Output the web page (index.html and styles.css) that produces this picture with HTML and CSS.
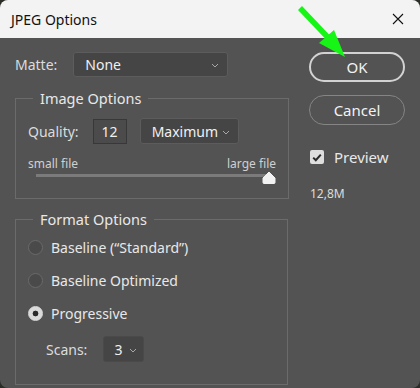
FILE: index.html
```html
<!DOCTYPE html>
<html lang="en">
  <head>
    <meta charset="UTF-8" />
    <title>JPEG Options</title>
    <link rel="stylesheet" href="styles.css">
  </head>
  <body>
    <div class="window">
      <div class="titlebar">
        <span class="title">JPEG Options</span>
        <svg class="close" width="12" height="12" viewBox="0 0 12 12">
          <path d="M1 1L11 11M11 1L1 11" stroke="#111" stroke-width="1.1" fill="none" />
        </svg>
      </div>

      <div class="content">
        <!-- left column -->
        <div class="left">
          <div class="row matte-row">
            <span class="label">Matte:</span>
            <div class="select matte-select">
              <span>None</span>
              <svg class="chev" width="8" height="5" viewBox="0 0 8 5"><path d="M1 1L4 4L7 1" stroke="#a8a8a8" fill="none" /></svg>
            </div>
          </div>

          <fieldset class="group image-group">
            <legend>Image Options</legend>
            <div class="row quality-row">
              <span class="label">Quality:</span>
              <div class="num-input">12</div>
              <div class="select quality-select">
                <span>Maximum</span>
                <svg class="chev" width="8" height="5" viewBox="0 0 8 5"><path d="M1 1L4 4L7 1" stroke="#a8a8a8" fill="none" /></svg>
              </div>
            </div>
            <div class="slider-labels">
              <span>small file</span>
              <span>large file</span>
            </div>
            <div class="slider">
              <div class="track"></div>
              <svg class="thumb" width="14" height="13" viewBox="0 0 14 13">
                <path d="M7 1L13 7V11.5Q13 12.5 12 12.5H2Q1 12.5 1 11.5V7Z" fill="#f2f2f2" stroke="#f2f2f2" stroke-linejoin="round" />
              </svg>
            </div>
          </fieldset>

          <fieldset class="group format-group">
            <legend>Format Options</legend>
            <div class="radio-row">
              <span class="radio"></span>
              <span>Baseline (“Standard”)</span>
            </div>
            <div class="radio-row">
              <span class="radio"></span>
              <span>Baseline Optimized</span>
            </div>
            <div class="radio-row">
              <span class="radio checked"></span>
              <span>Progressive</span>
            </div>
            <div class="row scans-row">
              <span class="label">Scans:</span>
              <div class="select scans-select">
                <span>3</span>
                <svg class="chev" width="8" height="5" viewBox="0 0 8 5"><path d="M1 1L4 4L7 1" stroke="#a8a8a8" fill="none" /></svg>
              </div>
            </div>
          </fieldset>
        </div>

        <!-- right column -->
        <div class="right">
          <button class="btn btn-ok">OK</button>
          <button class="btn btn-cancel">Cancel</button>
          <div class="preview">
            <span class="checkbox">
              <svg width="10" height="9" viewBox="0 0 10 9"><path d="M1.2 4.6L3.8 7.2L8.8 1.6" stroke="#2b2b2b" stroke-width="2" fill="none" /></svg>
            </span>
            <span>Preview</span>
          </div>
          <div class="size">12,8M</div>
        </div>
      </div>

      <!-- annotation arrow -->
      <svg class="arrow" width="70" height="70" viewBox="0 0 70 70">
        <path d="M8 8L45 47" stroke="#16f516" stroke-width="5.5" fill="none" />
        <path d="M27 43L42 30L53 57Z" fill="#16f516" />
      </svg>
    </div>
  </body>
</html>
```

FILE: styles.css
```css
body {
  margin: 0;
  background-color: #2a2c26;
  font-family: "Noto Sans", "Open Sans", sans-serif;
  font-size: 14px;
  color: #e8e8e8;
}

.window {
  position: relative;
  width: 420px;
  height: 388px;
  background-color: #535353;
  border-radius: 8px;
  overflow: hidden;
}

.titlebar {
  height: 38px;
  background-color: #f3f3f3;
  display: flex;
  align-items: center;
  justify-content: space-between;
  padding: 0 16px 0 11px;
}

.title {
  color: #111;
  font-size: 14px;
}

.content {
  display: flex;
  padding: 14px 0 0 15px;
}

.left {
  width: 273px;
}

.right {
  margin-left: 21px;
  width: 96px;
  display: flex;
  flex-direction: column;
}

.row {
  display: flex;
  align-items: center;
}

.label {
  color: #dcdcdc;
}

.select {
  box-sizing: border-box;
  display: flex;
  align-items: center;
  justify-content: space-between;
  background-color: #454545;
  border: 1px solid #5c5c5c;
  border-radius: 3px;
  padding: 0 8px 0 11px;
  color: #f0f0f0;
}

.chev {
  margin-top: 2px;
}

.matte-row {
  height: 25px;
}

.matte-select {
  margin-left: 16px;
  width: 155px;
  height: 25px;
}

.group {
  margin: 0;
  border: 1px solid #6b6b6b;
  padding: 0 12px;
}

.group legend {
  margin-left: 5px;
  padding: 0 7px;
  font-size: 14.5px;
  line-height: 20px;
  color: #e8e8e8;
}

.image-group {
  margin-top: 11px;
  height: 111px;
  box-sizing: border-box;
}

.quality-row {
  margin-top: 10px;
  height: 26px;
}

.num-input {
  box-sizing: border-box;
  margin-left: 14px;
  width: 34px;
  height: 25px;
  background-color: #4b4b4b;
  border: 1px solid #383838;
  text-align: center;
  line-height: 23px;
  color: #f0f0f0;
}

.quality-select {
  margin-left: 13px;
  width: 99px;
  height: 26px;
}

.slider-labels {
  display: flex;
  justify-content: space-between;
  font-size: 12px;
  line-height: 16px;
  color: #d0d0d0;
  margin-top: 12px;
  width: 248px;
}

.slider {
  position: relative;
  height: 16px;
  margin-left: 8px;
  width: 240px;
}

.track {
  margin-top: 2px;
  height: 3px;
  width: 234px;
  background-color: #7b7b7b;
}

.thumb {
  position: absolute;
  left: 226px;
  top: -3px;
}

.format-group {
  margin-top: 10px;
  height: 176px;
  box-sizing: border-box;
  padding-top: 2px;
}

.radio-row {
  display: flex;
  align-items: center;
  height: 33px;
}

.radio {
  box-sizing: border-box;
  width: 15px;
  height: 15px;
  border-radius: 50%;
  border: 1px solid #6a6a6a;
  background-color: #4a4a4a;
  margin-right: 8px;
}

.radio.checked {
  border-color: #dadada;
  background: radial-gradient(circle, #2a2a2a 0 2.6px, #dadada 3.2px);
}

.scans-row {
  margin-top: 6px;
  height: 26px;
  padding-left: 18px;
}

.scans-select {
  margin-left: 16px;
  width: 41px;
  height: 26px;
  padding: 0 6px 0 10px;
  border-color: #4a4a4a;
}

.btn {
  box-sizing: border-box;
  width: 96px;
  height: 30px;
  border-radius: 15px;
  background: transparent;
  font-family: inherit;
  font-size: 15px;
  color: #f2f2f2;
  padding: 0;
}

.btn-ok {
  border: 2px solid #d2d2d2;
}

.btn-cancel {
  margin-top: 13px;
  border: 1px solid #858585;
}

.preview {
  display: flex;
  align-items: center;
  margin-top: 22px;
  font-size: 15px;
  padding-left: 1px;
}

.checkbox {
  width: 14px;
  height: 14px;
  border-radius: 2px;
  background-color: #dedede;
  display: flex;
  align-items: center;
  justify-content: center;
  margin-right: 10px;
}

.size {
  margin-top: 18px;
  font-size: 12px;
  color: #dcdcdc;
  padding-left: 1px;
}

.arrow {
  position: absolute;
  left: 292px;
  top: 0;
}
```
